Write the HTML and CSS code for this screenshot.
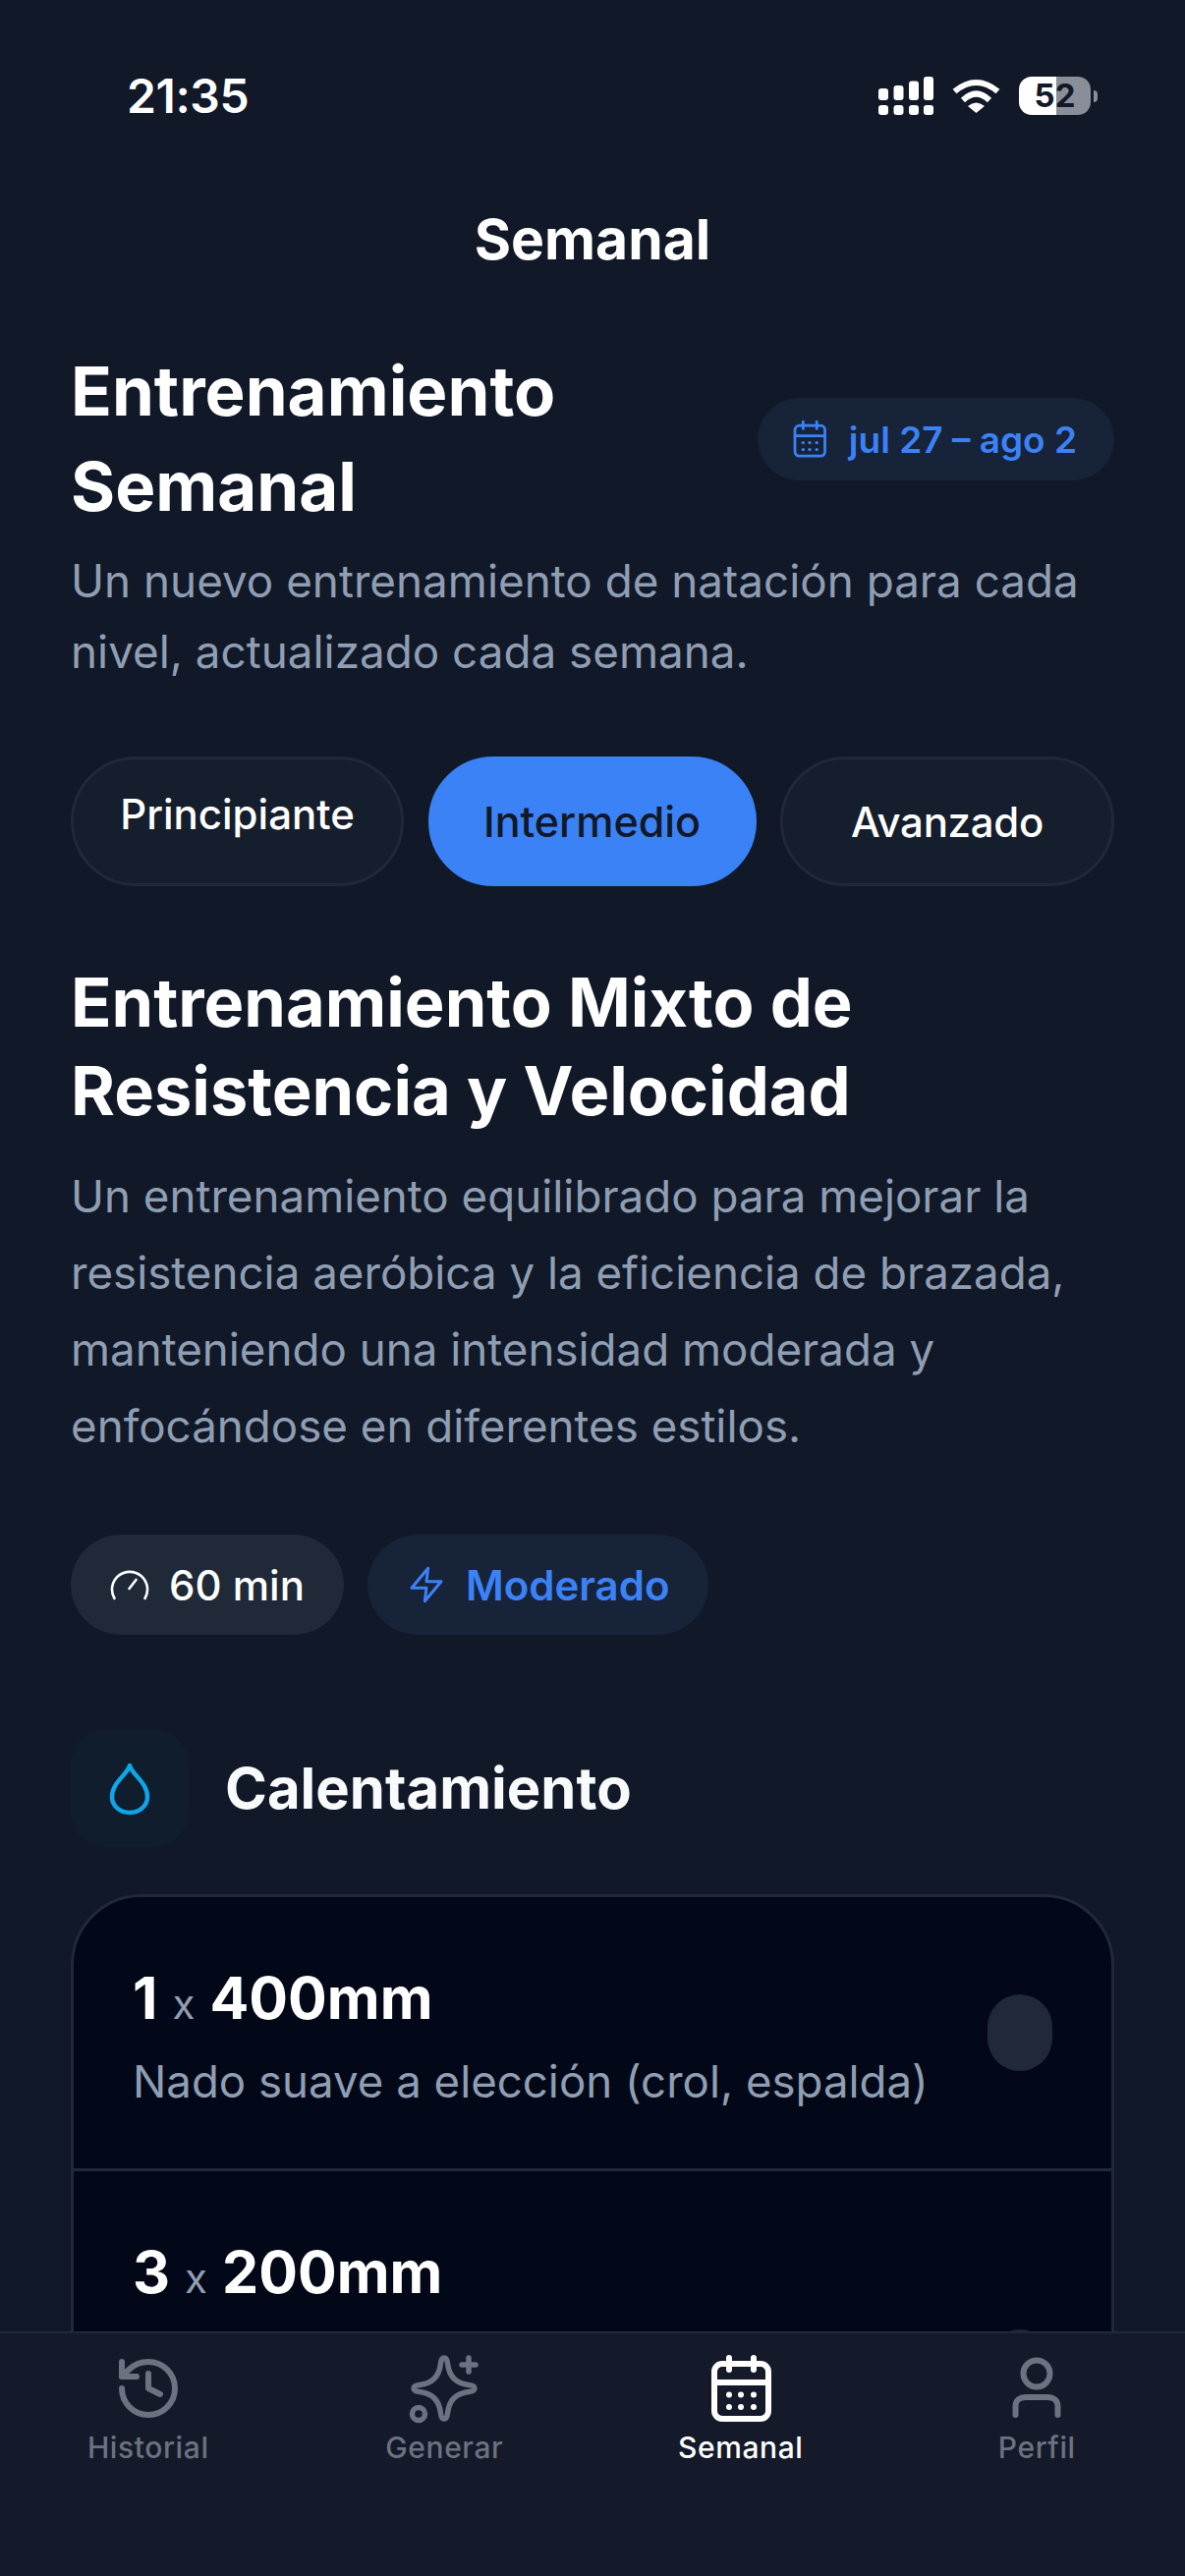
FILE: index.html
```html
<!DOCTYPE html>
<html lang="es">
<head>
<meta charset="utf-8">
<title>Semanal</title>
<link rel="stylesheet" href="styles.css">
</head>
<body>
<div class="page">
  <header class="status">
    <span class="time">21:35</span>
    <div class="status-icons">
      <svg class="signal" width="56" height="39" viewBox="0 0 56 39" fill="#fff">
        <rect x="0" y="12" width="10" height="12" rx="3"/><rect x="15.5" y="9" width="10" height="15" rx="3"/><rect x="31" y="4.5" width="10" height="19.5" rx="3"/><rect x="46" y="0" width="10" height="24" rx="3"/>
        <rect x="0" y="29" width="10" height="10" rx="3"/><rect x="15.5" y="29" width="10" height="10" rx="3"/><rect x="31" y="29" width="10" height="10" rx="3"/><rect x="46" y="29" width="10" height="10" rx="3"/>
      </svg>
      <svg class="wifi" width="49" height="35" viewBox="0 0 49 35" fill="none" stroke="#fff" stroke-width="6">
        <path d="M2.5 13Q24.500-5 46.500 13"/><path d="M11 22Q24.500 9 38 22"/><path d="M16 28Q24.500 21 33 28L24.500 35Z" fill="#fff" stroke="none"/>
      </svg>
      <div class="battery">52</div>
    </div>
  </header>

  <h2 class="nav-title">Semanal</h2>

  <main class="content">
    <div class="hero">
      <h1 class="hero-title">Entrenamiento Semanal</h1>
      <div class="date-pill">
        <svg class="date-icon" width="40" height="40" viewBox="0 0 72 72" fill="none" stroke="#3b82f6" stroke-width="5" stroke-linecap="round">
          <rect x="9" y="11" width="55" height="56" rx="8"/><path d="M9 30H64M24 4V17M49 4V17"/>
          <g fill="#3b82f6" stroke="none"><circle cx="24" cy="42.500" r="3"/><circle cx="36" cy="42.500" r="3"/><circle cx="49" cy="42.500" r="3"/><circle cx="24" cy="55" r="3"/><circle cx="36" cy="55" r="3"/><circle cx="49" cy="55" r="3"/></g>
        </svg>
        <span>jul 27 – ago 2</span>
      </div>
    </div>
    <p class="hero-sub">Un nuevo entrenamiento de natación para cada nivel, actualizado cada semana.</p>

    <div class="levels">
      <button class="level level-raised">Principiante</button>
      <button class="level level-active">Intermedio</button>
      <button class="level level-tight">Avanzado</button>
    </div>

    <h2 class="workout-title">Entrenamiento Mixto de Resistencia y Velocidad</h2>
    <p class="workout-desc">Un entrenamiento equilibrado para mejorar la resistencia aeróbica y la eficiencia de brazada, manteniendo una intensidad moderada y enfocándose en diferentes estilos.</p>

    <div class="chips">
      <div class="chip chip-time">
        <svg width="40" height="40" viewBox="0 0 40 40" fill="none" stroke="#fff" stroke-width="2.600" stroke-linecap="round"><path d="M4.500 34A18 18 0 1 1 35.500 34"/><path d="M19.500 24L26.500 15"/></svg>
        <span>60 min</span>
      </div>
      <div class="chip chip-level">
        <svg width="40" height="40" viewBox="0 0 24 24" fill="none" stroke="#3b82f6" stroke-width="1.800" stroke-linecap="round" stroke-linejoin="round"><path d="M13 2 3 14h9l-1 8 10-12h-9l1-8z"/></svg>
        <span>Moderado</span>
      </div>
    </div>

    <div class="section-head">
      <div class="section-icon">
        <svg width="48" height="56" viewBox="0 0 48 56" fill="none" stroke="#0ea5e9" stroke-width="4.500" stroke-linejoin="round"><path d="M24 5C26 14 42 22 42 37C42 46 34 53 24 53C14 53 6 46 6 37C6 22 22 14 24 5Z"/></svg>
      </div>
      <h3 class="section-title">Calentamiento</h3>
    </div>

    <section class="card">
      <div class="row">
        <div class="row-text">
          <div class="row-main"><b>1</b><span class="times">x</span><b>400mm</b></div>
          <div class="row-desc">Nado suave a elección (crol, espalda)</div>
        </div>
        <div class="row-dot"></div>
      </div>
      <div class="row row-tall">
        <div class="row-text">
          <div class="row-main"><b>3</b><span class="times">x</span><b>200mm</b></div>
        </div>
        <div class="row-dot"></div>
      </div>
    </section>
  </main>

  <nav class="tabbar">
    <div class="tab">
      <svg width="72" height="72" viewBox="0 0 24 24" fill="none" stroke="currentColor" stroke-width="2" stroke-linecap="round" stroke-linejoin="round"><path d="M3 12a9 9 0 1 0 9-9 9.750 9.750 0 0 0-6.740 2.740L3 8"/><path d="M3 3v5h5"/><path d="M12 7v5l4 2"/></svg>
      <span>Historial</span>
    </div>
    <div class="tab">
      <svg width="72" height="72" viewBox="0 0 72 72" fill="none" stroke="currentColor" stroke-width="5.500" stroke-linecap="round" stroke-linejoin="round"><path d="M36 5C38.500 5 39.200 7.500 39.600 11C41 24 48 31 61 32.500C65 33 67 34 67 36C67 38 65 39 61 39.500C48 41 41 48 39.600 61C39.200 64.500 38.500 67 36 67C33.500 67 32.800 64.500 32.400 61C31 48 24 41 11 39.500C7 39 5 38 5 36C5 34 7 33 11 32.500C24 31 31 24 32.400 11C32.800 7.500 33.500 5 36 5Z"/><path d="M61 5V19M54 12H68"/><circle cx="10" cy="62" r="6.500"/></svg>
      <span>Generar</span>
    </div>
    <div class="tab tab-active">
      <svg width="72" height="72" viewBox="0 0 72 72" fill="none" stroke="currentColor" stroke-width="6" stroke-linecap="round"><rect x="9" y="11" width="55" height="56" rx="8"/><path d="M9 30H64M24 5V17M49 5V17"/><g fill="currentColor" stroke="none"><circle cx="24" cy="42.500" r="3"/><circle cx="36" cy="42.500" r="3"/><circle cx="49" cy="42.500" r="3"/><circle cx="24" cy="55" r="3"/><circle cx="36" cy="55" r="3"/><circle cx="49" cy="55" r="3"/></g></svg>
      <span>Semanal</span>
    </div>
    <div class="tab">
      <svg width="72" height="72" viewBox="0 0 72 72" fill="none" stroke="currentColor" stroke-width="6" stroke-linecap="round"><circle cx="36" cy="21" r="13.500"/><path d="M14.500 63V54C14.500 48 19 45 25 45H47C53 45 57.500 48 57.500 54V63"/></svg>
      <span>Perfil</span>
    </div>
  </nav>
</div>
</body>
</html>
```
FILE: styles.css
```css
* { box-sizing: border-box; }
html, body { margin: 0; padding: 0; }
body { background: #111827; font-family: Inter, "Liberation Sans", sans-serif; color: #f8fafc; }
h1, h2, h3, p { margin: 0; }

.page { position: relative; width: 1206px; height: 2622px; overflow: hidden; background: #111827; }

.status { display: flex; justify-content: space-between; align-items: center; height: 39px; margin-top: 78px; padding: 0 96px 0 129px; }
.time { font-size: 48px; font-weight: 600; color: #fff; letter-spacing: -0.4px; }
.status-icons { display: flex; align-items: center; gap: 19px; }
.battery { position: relative; width: 73px; height: 39px; border-radius: 13px; background: linear-gradient(90deg, #fff 52%, #8a8e99 52%); color: #111827; font-size: 33px; font-weight: 700; line-height: 39px; text-align: center; }
.battery::after { content: ""; position: absolute; left: 76px; top: 14px; width: 4px; height: 12px; border-radius: 0 6px 6px 0; background: #8a8e99; }

.nav-title { margin-top: 93px; font-size: 57px; line-height: 68px; font-weight: 700; text-align: center; color: #fff; }

.content { padding: 72px 72px 0; }

.hero { display: flex; justify-content: space-between; align-items: center; }
.hero-title { width: 560px; font-size: 69px; line-height: 97px; font-weight: 700; color: #fff; }
.date-pill { display: flex; align-items: center; gap: 20px; height: 84px; padding: 0 38px 0 33px; border-radius: 42px; background: #172339; color: #3b82f6; font-size: 37px; font-weight: 600; }
.date-icon { flex: none; }
.hero-sub { margin-top: 12px; font-size: 45.8px; line-height: 72px; color: #8f9eb3; }

.levels { display: flex; justify-content: space-between; margin-top: 70px; }
.level { height: 132px; border: 3px solid #1f2937; border-radius: 66px; background: #151e2c; color: #fff; font-family: inherit; font-size: 42px; font-weight: 500; padding: 0; width: 339px; }
.level-raised { padding-bottom: 16px; }
.level-tight { width: 340px; letter-spacing: -0.3px; }
.level-active { width: 334px; background: #3b82f6; border-color: #3b82f6; color: #111827; font-size: 43px; }

.workout-title { margin-top: 74px; font-size: 68.5px; line-height: 90px; font-weight: 700; color: #fff; }
.workout-desc { margin-top: 23px; font-size: 45.7px; line-height: 78px; color: #8f9eb3; }

.chips { display: flex; gap: 24px; margin-top: 71px; }
.chip { display: flex; align-items: center; gap: 20px; height: 102px; padding: 0 40px; border-radius: 51px; font-size: 42px; font-weight: 500; }
.chip-time { background: #1f2937; color: #fff; }
.chip-level { background: #172339; color: #3b82f6; font-weight: 600; }

.section-head { display: flex; align-items: center; gap: 37px; margin-top: 96px; }
.section-icon { display: flex; align-items: center; justify-content: center; width: 120px; height: 120px; border-radius: 36px; background: #0f1d2d; }
.section-title { font-size: 58px; font-weight: 700; color: #f8fafc; }

.card { margin-top: 48px; border: 3px solid #1f2937; border-radius: 72px; background: #020817; overflow: hidden; }
.row { display: flex; align-items: center; justify-content: space-between; gap: 40px; min-height: 276px; padding: 0 60px; }
.row + .row { border-top: 3px solid #1f2937; }
.row-tall { min-height: 403px; }
.row-text { flex: 1; align-self: flex-start; padding-top: 68px; }
.row-main { font-size: 59px; line-height: 70px; color: #fff; }
.row-main b { font-weight: 700; }
.times { margin: 0 15px; font-size: 42px; color: #8f9eb3; }
.row-desc { margin-top: 13px; font-size: 45.6px; line-height: 62px; color: #8f9eb3; }
.row-dot { flex: none; width: 66px; height: 78px; border-radius: 33px; background: #1f2937; }

.tabbar { position: absolute; left: 0; right: 0; bottom: 0; height: 249px; display: grid; grid-template-columns: repeat(4, 301.5px); border-top: 2px solid #1f2937; background: #141a29; color: #6b7280; }
.tab { display: flex; flex-direction: column; align-items: center; padding-top: 20px; font-size: 30px; letter-spacing: 0.6px; font-weight: 500; }
.tab span { line-height: 36px; margin-top: 6px; }
.tab-active { color: #fff; }
```
